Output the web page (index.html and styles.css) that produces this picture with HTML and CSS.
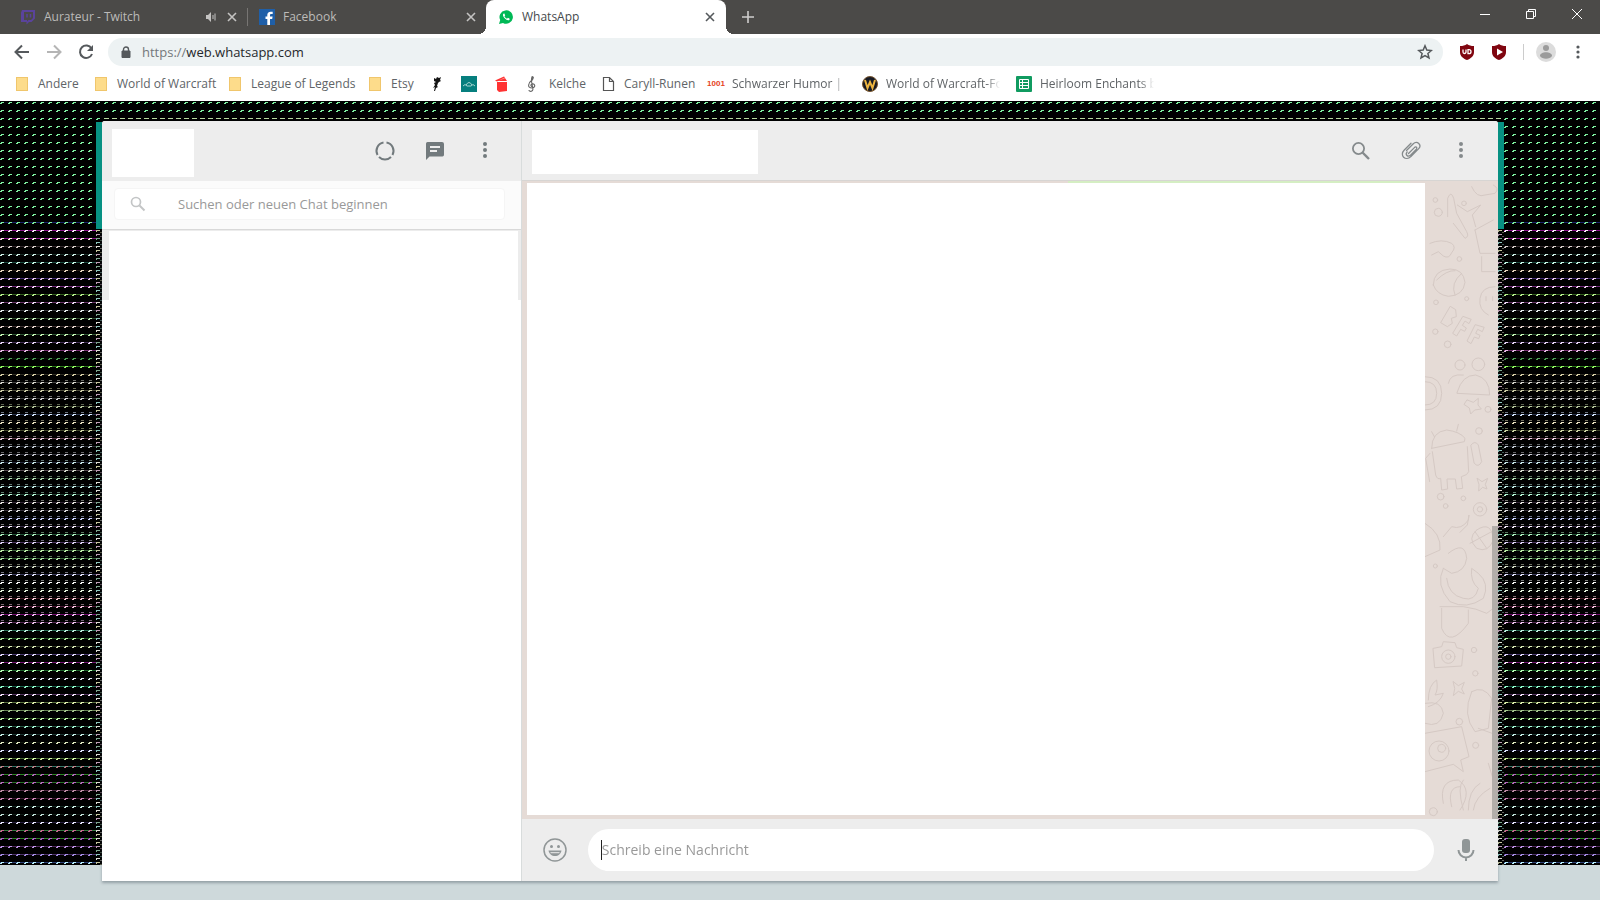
FILE: index.html
```html
<!DOCTYPE html>
<html lang="de">
<head>
<meta charset="utf-8">
<title>WhatsApp</title>
<link rel="stylesheet" href="styles.css">
</head>
<body>
<header class="browser">
  <div class="titlebar">
    <div class="tab tab-first">
      <svg class="fav" viewBox="0 0 16 16"><path d="M2 1h13v8.500l-3.500 3.500H9l-2.500 2.500V13H1V3.500z" fill="#5a439c"/><path d="M4 3h9v6l-2 2H8.500L7 12.500V11H4z" fill="#4b4a48"/><path d="M7 5v3.500M10.500 5v3.500" stroke="#5a439c" stroke-width="1.500"/></svg>
      <span class="tab-title">Aurateur - Twitch</span>
      <svg class="sound" viewBox="0 0 12 12"><path d="M1 4h2l3-3v10L3 8H1z" fill="#c4c3c2"/><path d="M8 4v4M10 2.500v7" stroke="#c4c3c2"/></svg>
      <button class="close" aria-label="Tab schließen"><svg viewBox="0 0 10 10"><path d="M1 1l8 8M9 1L1 9"/></svg></button>
    </div>
    <div class="tab tab-second">
      <svg class="fav" viewBox="0 0 16 16"><path d="M0 0h16v16H0z" fill="#1f5fa8"/><path d="M11 16V10h2.200l.4-2.500H11V6.300c0-.9.400-1.300 1.300-1.300h1.400V2.700h-2C9.400 2.700 8.300 4 8.300 6v1.500H6.500V10h1.800v6z" fill="#fff"/></svg>
      <span class="tab-title">Facebook</span>
      <button class="close" aria-label="Tab schließen"><svg viewBox="0 0 10 10"><path d="M1 1l8 8M9 1L1 9"/></svg></button>
    </div>
    <div class="tab tab-active">
      <svg class="fav" viewBox="0 0 16 16"><path d="M1 15l1.200-4A6.700 6.700 0 1 1 5 13.900z" fill="#00b956"/><path d="M5.700 4.500c-1.500 1-.7 3 1 4.800s4 2.700 4.900 1.100c.2-.6 0-.8-1.700-1.600L9 9.700C7.800 9.200 7 8.400 6.400 7.300l.8-.9-.8-1.800z" fill="#fff"/></svg>
      <span class="tab-title">WhatsApp</span>
      <button class="close" aria-label="Tab schließen"><svg viewBox="0 0 10 10"><path d="M1 1l8 8M9 1L1 9"/></svg></button>
    </div>
    <button class="newtab" aria-label="Neuer Tab"><svg viewBox="0 0 12 12"><path d="M6 0v12M0 6h12"/></svg></button>
    <div class="winbtns">
      <button aria-label="Minimieren"><svg viewBox="0 0 12 12"><path d="M1 6.500h10"/></svg></button>
      <button aria-label="Verkleinern"><svg viewBox="0 0 12 12"><path d="M1.500 3.500h7v7h-7zM3.500 3.500v-2h7v7h-2"/></svg></button>
      <button aria-label="Schließen"><svg viewBox="0 0 12 12"><path d="M1 1l10 10M11 1L1 11"/></svg></button>
    </div>
  </div>
  <div class="toolbar">
    <button class="nav" aria-label="Zurück"><svg viewBox="0 0 16 16"><path d="M15 8H2M8 1.500L1.500 8 8 14.500"/></svg></button>
    <button class="nav nav-off" aria-label="Vorwärts"><svg viewBox="0 0 16 16"><path d="M1 8h13M8 1.500L14.500 8 8 14.500"/></svg></button>
    <button class="nav nav-last" aria-label="Neu laden"><svg viewBox="0 0 16 16"><path d="M13.500 4.500A6.200 6.200 0 1 0 14 10"/><path d="M15 1v6H9z" class="solid"/></svg></button>
    <div class="address">
      <svg class="lock" viewBox="0 0 10 12"><path d="M1 5h8v6.500H1z" fill="#55595c" stroke="#55595c"/><path d="M2.500 5V3.500a2.500 2.500 0 0 1 5 0V5" fill="none" stroke="#55595c" stroke-width="1.400"/></svg>
      <span class="url"><span class="scheme">https://</span>web.whatsapp.com</span>
      <button class="star" aria-label="Lesezeichen"><svg viewBox="0 0 16 16"><path d="M8 1.800l1.800 4.300 4.600.4-3.500 3 1.100 4.500L8 11.600 4 14l1.100-4.500-3.500-3 4.600-.4z"/></svg></button>
    </div>
    <button class="ext" aria-label="uBlock"><svg viewBox="0 0 16 16"><path d="M8 0c2 1.500 4 2 7 2v6c0 4-3 6.500-7 8-4-1.500-7-4-7-8V2c3 0 5-.5 7-2z" fill="#800610"/><path d="M4 5.500V8a1.500 1.500 0 0 0 3 0V5.500M9 5.700v4h1a2 2 0 0 0 0-4z" fill="none" stroke="#fff" stroke-width="1.300"/></svg></button>
    <button class="ext" aria-label="Video"><svg viewBox="0 0 16 16"><path d="M8 0c2 1.500 4 2 7 2v6c0 4-3 6.500-7 8-4-1.500-7-4-7-8V2c3 0 5-.5 7-2z" fill="#800610"/><path d="M6 4.500v7L12 8z" fill="#fff"/></svg></button>
    <span class="sep"></span>
    <button class="profile" aria-label="Profil"><svg viewBox="0 0 20 20"><circle cx="10" cy="10" r="10" fill="#dcdcdc"/><circle cx="10" cy="6" r="3" fill="#9b9b9b"/><path d="M4 14c0-5 12-5 12 0-2 3.500-10 3.500-12 0z" fill="#9b9b9b"/></svg></button>
    <button class="more" aria-label="Menü"><svg viewBox="0 0 4 14"><circle cx="2" cy="2" r="1.600"/><circle cx="2" cy="7" r="1.600"/><circle cx="2" cy="12" r="1.600"/></svg></button>
  </div>
  <nav class="bookmarks">
    <a href="#" class="bm bm-andere"><span class="folder"></span>Andere</a>
    <a href="#" class="bm bm-wow"><span class="folder"></span>World of Warcraft</a>
    <a href="#" class="bm bm-lol"><span class="folder"></span>League of Legends</a>
    <a href="#" class="bm bm-etsy"><span class="folder"></span>Etsy</a>
    <a href="#" class="bm bm-icon" aria-label="Figur"><svg viewBox="0 0 16 16"><path d="M6 2l2 1 1-2 2 1 2-1-1 3 1 1-2 1-1 1-1 3 1 1-2 1-1 3H6l1-4-2 1 2-3-1-2 2-1-2-1z" fill="#151515"/></svg></a>
    <a href="#" class="bm bm-icon" aria-label="Wappen"><svg viewBox="0 0 16 16"><path d="M0 0h16v16H0z" fill="#067f7e"/><path d="M2 10q2-3 4 0M10 10q2-3 4 0M5 9q3-5 6 0M6 10h4" fill="none" stroke="#a5d5d1"/></svg></a>
    <a href="#" class="bm bm-box" aria-label="Box"><svg viewBox="0 0 16 16"><path d="M3 6h10v9l-8 1-2-2zM1 4.500L10 .5l1 1-8 4zM4 5l7-3 2 3z" fill="#f33"/></svg></a>
    <a href="#" class="bm bm-kelche"><svg viewBox="0 0 16 16"><path d="M8.500 0C6 3 8 7 9 13c0 3-4 3-4 1M8 4.500C11 0 8 0 8 4c-4 3-5 8 0 8 5-1 2-5 0-4-2 1-1 3 1 3" fill="none" stroke="#666" stroke-width="1.100"/></svg>Kelche</a>
    <a href="#" class="bm bm-runen"><svg viewBox="0 0 16 16"><path d="M3.500 1.500h6l4 4v9h-10zM9.500 1.500v4h4" fill="none" stroke="#555" stroke-width="1.200"/></svg>Caryll-Runen</a>
    <a href="#" class="bm bm-humor"><b>1001</b><span class="fade">Schwarzer Humor | Best</span></a>
    <a href="#" class="bm bm-forum"><svg viewBox="0 0 16 16"><circle cx="8" cy="8" r="7.500" fill="#171a24" stroke="#76542f"/><path d="M3 4l2.500 8L8 6l2.500 6L13 4" fill="none" stroke="#edb43f" stroke-width="2"/></svg><span class="fade">World of Warcraft-Foren</span></a>
    <a href="#" class="bm bm-heirloom"><svg viewBox="0 0 16 16"><rect width="16" height="16" rx="1" fill="#109b60"/><path d="M3.500 3.500h9v9h-9zM3.500 6.500h9M3.500 9.500h9M6.500 3.500v9" fill="none" stroke="#fff"/></svg><span class="fade">Heirloom Enchants by Slot</span></a>
  </nav>
</header>
<main class="page">
  <canvas class="static" id="static"></canvas>
  <div class="app">
    <section class="side">
      <header class="bar side-bar">
        <div class="avatar"></div>
        <div class="actions">
          <button aria-label="Status"><svg viewBox="0 0 24 24"><g fill="none" stroke="#727a7d" stroke-width="2"><path d="M13.500 3.600A8.500 8.500 0 0 1 19.500 16"/><path d="M18 18a8.500 8.500 0 0 1-12 0"/><path d="M4.500 16A8.500 8.500 0 0 1 10.500 3.600"/></g></svg></button>
          <button aria-label="Neuer Chat"><svg viewBox="0 0 24 24"><path d="M19 3H4.500A1.700 1.700 0 0 0 3 4.700V21l3.500-3.500H19.500A1.700 1.700 0 0 0 21 15.800V5a2 2 0 0 0-2-2z" fill="#727a7d"/><path d="M7 8h10M7 12h7" stroke="#ededed" stroke-width="2"/></svg></button>
          <button aria-label="Menü"><svg viewBox="0 0 24 24"><g fill="#727a7d"><circle cx="12" cy="5" r="2"/><circle cx="12" cy="11" r="2"/><circle cx="12" cy="17" r="2"/></g></svg></button>
        </div>
      </header>
      <div class="search">
        <label class="search-box">
          <svg viewBox="0 0 16 16"><circle cx="6" cy="6" r="4.500" fill="none" stroke="#c3c5c6" stroke-width="1.700"/><path d="M9.500 9.500l5 5" stroke="#c3c5c6" stroke-width="2"/></svg>
          <input type="text" aria-label="Suchen" placeholder="Suchen oder neuen Chat beginnen">
        </label>
      </div>
      <div class="list"><div class="row"></div></div>
    </section>
    <section class="chat">
      <header class="bar chat-bar">
        <div class="contact"></div>
        <div class="actions">
          <button aria-label="Suchen"><svg viewBox="0 0 24 24"><g fill="none" stroke="#858a8c"><circle cx="9.500" cy="9.500" r="5.600" stroke-width="1.800"/><path d="M13.500 13.500l6.500 6.500" stroke-width="2.300"/></g></svg></button>
          <button aria-label="Anhängen"><svg viewBox="0 0 24 24"><path d="M6.500 12.500l6.800-6.800c3.800-3.800 9 1.400 5.200 5.200l-7.600 7.600C5.600 23.800-1 17.200 4.300 12L11 5.300M8.500 15.500l5.900-5.900c2-1.800 3 .4 2 1.600l-5.900 5.900c-2.700 2.700-5.700-.7-3.300-3.200" transform="translate(1 -1)" fill="none" stroke="#858a8c" stroke-width="1.300" stroke-linecap="round"/></svg></button>
          <button aria-label="Menü"><svg viewBox="0 0 24 24"><g fill="#858a8c"><circle cx="12" cy="5" r="2"/><circle cx="12" cy="11" r="2"/><circle cx="12" cy="17" r="2"/></g></svg></button>
        </div>
      </header>
      <div class="messages">
        <svg class="doodles" viewBox="75 3 219 1914" preserveAspectRatio="xMaxYMin slice">
          <g fill="none" stroke="#d5c9c4" stroke-width="3" stroke-linecap="round" stroke-linejoin="round">
            <path d="M143 110V55q10-25 18 0l9 45 30 55q8 15-5 20l-35-45M172 75l30 20 40-20-25 30 10 35M215 20q15 35 40 25l30-5q15-15-5-25M225 150l55-30M225 150l15 70h45M245 230v45h40"/>
            <path d="M90 190q35-15 65 0 15 12 0 28-8 20-25 10l-15-13-20 10M100 315q0-45 50-48 40 0 45 40-5 40-50 42-35-5-45-34zM110 300q30-30 55-28M185 280q-35 30-20 65M285 320q-40 0-45 35-5 35 25 50M258 350v12M278 350v12"/>
            <path d="M150 380l-28 48 20 12 15-10-3-15 15-5-2-20zM188 410l-30 50 12 8 12-20 12 6 5-10-12-8 8-13 12 8 6-12zM225 435l-24 48 12 8 10-20 13 5 4-10-13-6 6-12 14 7 5-12z"/>
            <circle cx="180" cy="555" r="15"/><circle cx="235" cy="553" r="19"/><path d="M145 610q5-30 45-25M172 635q15-50 55-50 42 10 42 60l-97-5zM75 590q50 0 50 50t-50 50M75 605q35 0 35 35t-35 35"/>
            <path d="M95 805q0-50 45-55 40 5 55 25l-2 10-98 20zM95 755l8 15M175 733l-5 20M97 815l10 70q5 15 15 10l3 35 18-3-2-30h25l4 30 18-2-4-35q20-5 22-15l-4-75M213 795q12-15 22 0l10 50q-10 20-22 5zM90 820l-13 15 12 70"/>
            <path d="M75 1030q50 30 45 80l-45 20M130 1070l25-30q30 10 50-20l2-15-5 30-22 22M145 1120q50-40 55 15-5 40-45 45l-25-15M130 1165q-25 50 20 100 50 25 100-10 20-45-15-75l-20-15q-5 40 20 60-10 40-45 30-45-10-50-60M120 1280h70q40 5 70 20l20-15M125 1285v60q25 60 80-15v-40"/>
            <path d="M100 1405l25-5 5-15 35 3 5 15 20 5-5 50-80 5zM160 1505l15 12 18-10-8 20 8 15-18-8-15 13 4-20zM215 1535q35-20 60 20l-10 90-40 10q-40-50-10-120M85 1560q0-45 25-60 5 30-5 45l25-5q-10 30-45 40M75 1570q50-10 55 30-10 45-55 30"/>
            <path d="M75 1660l110-20 22 90-25 10 8 35-30-22-85 22M235 1645l55 20M130 1870q-15-70 45-70 45 30 5 90M155 1880q-15-60 25-60M190 1890q-20-70 0-90M205 1890q0-60 35-80M220 1890q5-40 50-65M265 1750l30 100"/>
            <circle cx="145" cy="1430" r="20"/><circle cx="145" cy="1430" r="8"/><circle cx="117" cy="1713" r="30"/><circle cx="125" cy="1705" r="12"/><circle cx="240" cy="988" r="20"/><circle cx="240" cy="988" r="8"/><path d="M202 660l18 7 15-12-1 20 10 12-20 3-12 12-4-18-15-10zM232 895l14 10 17-10-7 18 5 14-13-5-12 11 1-18zM230 1050q45-30 50 30-15 40-50 25-30-30 0-55M210 1090l65-35M225 1055l35 50"/>
            <circle cx="115" cy="97" r="12"/><circle cx="106" cy="60" r="7"/><circle cx="192" cy="70" r="7"/><circle cx="106" cy="455" r="8"/><circle cx="143" cy="493" r="10"/><circle cx="178" cy="237" r="7"/><circle cx="200" cy="356" r="6"/><circle cx="108" cy="367" r="7"/><circle cx="264" cy="688" r="9"/><circle cx="237" cy="753" r="10"/><circle cx="122" cy="950" r="10"/><circle cx="190" cy="955" r="7"/><circle cx="137" cy="978" r="7"/><circle cx="222" cy="1410" r="8"/><circle cx="226" cy="1480" r="8"/><circle cx="178" cy="1625" r="10"/><circle cx="227" cy="1696" r="9"/><circle cx="100" cy="1895" r="12"/><circle cx="106" cy="1158" r="6"/>
          </g>
        </svg>
        <div class="strip"></div>
        <div class="cover"></div>
        <div class="thumb"></div>
      </div>
      <footer class="compose">
        <button aria-label="Emoji"><svg viewBox="0 0 24 24"><circle cx="12" cy="12" r="11" fill="none" stroke="#909697" stroke-width="1.500"/><g fill="#909697"><circle cx="8.500" cy="8.500" r="1.500"/><circle cx="15.500" cy="8.500" r="1.500"/><path d="M5.500 12.500h13c-.6 3.500-3.200 5.500-6.500 5.500s-5.900-2-6.500-5.500z"/></g><path d="M7.500 14.700h9" stroke="#ededed"/></svg></button>
        <div class="field"><span class="caret"></span><input type="text" aria-label="Nachricht" placeholder="Schreib eine Nachricht"></div>
        <button class="mic" aria-label="Sprachnachricht"><svg viewBox="0 0 24 24"><rect x="8" y="1" width="8" height="14" rx="3" fill="#909697"/><path d="M4.500 12a7.500 7.500 0 0 0 15 0M12 19v4" fill="none" stroke="#909697" stroke-width="2"/></svg></button>
      </footer>
    </section>
  </div>
</main>
<script src="static.js"></script>
</body>
</html>
```
FILE: styles.css
```css
* { box-sizing: border-box; }
body {
  margin: 0;
  height: 100vh;
  display: flex;
  flex-direction: column;
  overflow: hidden;
  background: #ced9db;
  font-family: "Open Sans", "Noto Sans", sans-serif;
  font-size: 12px;
}
button { border: 0; padding: 0; margin: 0; background: none; display: flex; align-items: center; justify-content: center; flex: none; }
input { border: 0; padding: 0; outline: 0; background: none; font: inherit; }
svg { display: block; flex: none; }

.browser { background: #fff; flex: none; }
.titlebar { height: 34px; display: flex; background: #4b4a48; }
.tab { display: flex; align-items: center; color: #bcbbb9; min-width: 0; }
.tab-first { width: 248px; padding: 0 11px 0 20px; position: relative; }
.tab-first::after { content: ""; position: absolute; right: 0; top: 8px; width: 1px; height: 18px; background: #777573; }
.tab-second { width: 238px; padding: 0 10px 0 11px; }
.tab-active { width: 240px; padding: 0 11px 0 12px; background: #fff; color: #45494c; border-radius: 8px 8px 0 0; position: relative; }
.tab-active::before, .tab-active::after { content: ""; position: absolute; bottom: 0; width: 8px; height: 8px; }
.tab-active::before { left: -8px; background: radial-gradient(circle at 0 0, transparent 8px, #fff 8px); }
.tab-active::after { right: -8px; background: radial-gradient(circle at 100% 0, transparent 8px, #fff 8px); }
.fav { width: 16px; height: 16px; margin-right: 8px; }
.tab-title { flex: 1; white-space: nowrap; padding-bottom: 2px; }
.sound { width: 12px; height: 12px; margin-right: 10px; }
.close { width: 10px; height: 10px; }
.close svg { width: 10px; height: 10px; }
.close path { stroke: #c4c3c2; stroke-width: 1.600; }
.tab-active .close path { stroke: #55595c; }
.newtab { width: 12px; margin-left: 16px; }
.newtab svg { width: 12px; height: 12px; }
.newtab path { stroke: #cfcecd; stroke-width: 1.600; }
.winbtns { margin-left: auto; display: flex; padding-bottom: 6px; }
.winbtns button { width: 46px; }
.winbtns svg { width: 12px; height: 12px; }
.winbtns path { stroke: #fff; fill: none; }

.toolbar { height: 36px; display: flex; align-items: center; padding: 0 20px 0 14px; }
.nav { width: 16px; margin-right: 16px; }
.nav-last { margin-right: 14px; }
.nav svg { width: 16px; height: 16px; }
.nav path { fill: none; stroke: #55595c; stroke-width: 2; }
.nav .solid { fill: #55595c; stroke: none; }
.nav-off path { stroke: #b5b5b5; }
.address { flex: 1; height: 28px; margin-right: 16px; border-radius: 14px; background: #edf2f3; display: flex; align-items: center; padding: 0 10px 0 13px; }
.lock { width: 10px; height: 12px; margin-right: 11px; }
.url { flex: 1; font-size: 13px; line-height: 20px; color: #25282b; }
.scheme { color: #74787b; }
.star svg { width: 16px; height: 16px; }
.star path { fill: none; stroke: #55595c; stroke-width: 1.500; }
.ext { margin-right: 16px; }
.ext svg { width: 16px; height: 16px; }
.sep { width: 1px; height: 16px; background: #ccc; margin-right: 12px; }
.profile svg { width: 20px; height: 20px; }
.more { margin-left: 20px; }
.more svg { width: 4px; height: 14px; fill: #55595c; }

.bookmarks { height: 31px; display: flex; align-items: center; padding: 0 0 4px 16px; }
.bm { display: flex; align-items: center; color: #606467; text-decoration: none; white-space: nowrap; flex: none; }
.bm svg { width: 16px; height: 16px; }
.folder { width: 12px; height: 14px; margin-right: 10px; background: #fddc8b; border: 1px solid #f0c66c; }
.bm-andere { width: 79px; }
.bm-wow { width: 134px; }
.bm-lol { width: 140px; }
.bm-etsy { width: 59px; }
.bm-icon { width: 33px; }
.bm-box { width: 30px; }
.bm-kelche { width: 76px; gap: 9px; }
.bm-runen { width: 108px; gap: 8px; }
.bm-humor { width: 154px; gap: 8px; }
.bm-humor b { width: 16px; font: bold 8px/16px "Liberation Sans", sans-serif; color: #e5431b; display: flex; justify-content: center; }
.bm-forum { width: 154px; gap: 8px; }
.bm-heirloom { gap: 8px; }
.fade { width: 114px; overflow: hidden; -webkit-mask-image: linear-gradient(90deg, #000 88%, transparent); mask-image: linear-gradient(90deg, #000 88%, transparent); }

.page { flex: 1; min-height: 0; position: relative; padding: 20px 102px 19px; display: flex; }
.static { position: absolute; left: 0; top: 0; width: 100%; height: calc(100% - 35px); }
.app { position: relative; flex: 1; min-width: 0; display: flex; background: #fff; border-radius: 3px 3px 0 0; box-shadow: 0 2px 3px rgba(60, 75, 85, .4); }
.app::before, .app::after { content: ""; position: absolute; top: 1px; width: 6px; height: 107px; background: #079183; }
.app::before { left: -6px; }
.app::after { right: -6px; }
.side { width: 30%; flex: none; display: flex; flex-direction: column; }
.chat { flex: 1; min-width: 0; display: flex; flex-direction: column; border-left: 1px solid #d8dcdc; }
.bar { height: 60px; flex: none; background: #ededed; display: flex; align-items: center; justify-content: space-between; }
.side-bar { padding: 0 24px 0 10px; border-radius: 3px 0 0 0; }
.chat-bar { padding: 0 25px 0 10px; border-bottom: 1px solid #d7d5d3; border-radius: 0 3px 0 0; }
.avatar { width: 82px; height: 48px; margin-top: 4px; background: #fff; }
.contact { width: 226px; height: 44px; margin-top: 2px; background: #fff; }
.actions { display: flex; gap: 26px; }
.actions svg { width: 24px; height: 24px; }
.search { height: 49px; flex: none; padding: 7px 16px 9px 12px; background: #fbfbfb; border-bottom: 1px solid #d9d9d9; }
.search-box { height: 32px; display: flex; align-items: center; background: #fff; border: 1px solid #f5f5f5; border-radius: 4px; padding-left: 15px; }
.search-box svg { width: 16px; height: 16px; margin-right: 32px; }
.search-box input { flex: 1; min-width: 0; font-size: 13px; }
input::placeholder { color: #999; opacity: 1; }
.list { flex: 1; }
.row { height: 70px; border: solid #ececec; border-width: 1px 3px 0 7px; }
.messages { flex: 1; min-height: 0; position: relative; display: flex; background: #e5dbd6; padding: 2px 73px 4px 5px; }
.doodles { position: absolute; right: 0; top: 0; width: 73px; height: 100%; }
.strip { position: absolute; top: 0; left: 56%; width: 35%; height: 2px; background: #d5eec3; }
.cover { flex: 1; background: #fff; }
.thumb { position: absolute; right: 0; bottom: 0; width: 6px; height: 46%; background: #b3aeaa; }
.compose { height: 62px; flex: none; background: #ededed; display: flex; align-items: center; padding: 0 20px 0 21px; }
.compose svg { width: 24px; height: 24px; }
.field { flex: 1; height: 42px; margin: 0 20px 0 21px; border-radius: 21px; background: #fff; display: flex; align-items: center; padding: 0 13px; font-size: 14px; }
.caret { width: 1px; height: 20px; background: #222; }
.field input { flex: 1; min-width: 0; padding-bottom: 2px; }
```
FILE: static.js
```js
const canvas = document.getElementById('static');
const ctx = canvas.getContext('2d');

// One entry per 8px band: dash colour, line colour, line strength.
const bands = [
  ...Array(15).fill('7ef0a0 000000 0'),
  '7ef0a0 2838b0 .7', 'fff0ff c818c8 .8', 'fff0e8 c818c8 .8', 'd8d0cc 705860 .5', 'd0f0e8 407868 .4',
  'c8f8e8 287868 .7', 'e8d8c0 604838 .4', 'e8c8e8 5838a0 .8', 'f8d8f8 a038b0 .8', 'b8f090 488828 .8',
  'f0e0f8 a850a8 .7', 'e8f0f0 606068 .6', 'c8f0c0 487848 .7', 'e8d8d0 705858 .6', 'c8f8b8 488850 .7',
  'e8d8f8 684888 .7', 'e8c0e8 a840a0 .8', '50a058 103818 .4', '98f868 38a820 .8', 'd8d0a8 686048 .5',
  'd8d8d0 686868 .7', 'd0d0a8 686850 .8', 'd8d8d8 686868 .6', 'b8c8a0 506040 .7', 'd8e8ff 405078 .7',
  'e8e0c0 282820 .4', 'd0d8a8 606840 .7', 'f0d8e8 986078 .7', 'c8d0d8 404858 .7', 'c8c8d0 505060 .7',
  'c8e8e8 404868 .7', 'd8e0d0 706068 .8', 'b8e0b8 305038 .7', 'c8f0e8 406870 .7', 'b8f8d8 386850 .7',
  'e8e8e0 604868 .6', 'e0e0e0 706078 .5', 'd0d8ff 404080 .4', 'f8f0f8 685088 .6', 'b0f0c0 388858 .7',
  'e0d8f8 684888 .8', 'c0f0a8 508850 .8', 'b0e8a8 488848 .8', 'd8e0c8 505860 .7', 'e8e8ff 606098 .7',
  'f8f8f8 282830 .3', 'e8f8e0 283028 .3', 'f8d0d8 903048 .5', 'f8c8e0 a83078 .5', 'f8c0f8 a810a0 .8',
  'f0c8f0 783878 .8', 'c0f0e0 308868 .9', 'b8f0a8 308838 .7', 'd8e8b8 586840 .6', 'e8e0ff 6850a0 .8',
  'fff0ff a818a8 .8', 'b8ffb8 208838 .8', 'e8f0f8 303048 .4', '98ffd0 208868 .8', 'f8e8ff 784888 .8',
  'e0f0b0 709050 .9', 'a8c890 789860 1', 'c8ffb0 386828 .8', 'a8f8d8 307858 .8', 'c8f0e8 306058 .6',
  'e0e8c0 304028 .4', 'e0e8ff 383068 .5', 'd8f8a8 507838 1', 'c08088 408878 1', 'b868c0 309828 1',
  'b868c0 38a038 .8', 'c090a8 784068 .7', 'd088b8 703058 .6', 'd0f0e8 285848 .5', 'c0e0d8 284838 .4',
  'e8e8ff 483878 .6', 'c86890 388848 1', 'b060c8 309828 1', 'c098e8 703880 .8', 'a890e8 583878 1',
  'b8f0ff 4058a8 .8'
];

// Two-row dash tile repeated every 8px.
function drawBand(y, width, spec, index) {
  const [dash, line, strength] = spec.split(' ');
  ctx.globalAlpha = Number(strength) * 0.85;
  ctx.fillStyle = '#' + line;
  ctx.fillRect(0, y, width, 1);
  // Bands 35-65 carry a second, fainter row of dashes above the main one.
  if (index > 34 && index < 66) {
    ctx.globalAlpha = 0.5;
    ctx.fillStyle = '#' + dash;
    for (let x = 1; x < width; x += 8) ctx.fillRect(x, y - 2, 3, 1);
  }
  ctx.globalAlpha = 1;
  ctx.fillStyle = '#' + dash;
  for (let x = 0; x < width; x += 8) {
    ctx.fillRect(x + 1, y, 3, 1);
    ctx.fillRect(x, y + 1, 2, 1);
  }
}

// Narrow noisy column beside the app window.
function drawEdge(x, height) {
  const tints = ['#c8c8a0', '#90c8c0', '#c0a0b8', '#e0e0d8', '#80a890'];
  ctx.fillStyle = '#000';
  ctx.fillRect(x, 128, 6, height);
  for (let y = 129, i = 0; y < height; y += 4, i++) {
    ctx.fillStyle = tints[(i * 7 + (i >> 3)) % tints.length];
    ctx.fillRect(x, y, 4, 1);
    ctx.fillRect(x, y + 1, 1, 1);
    ctx.globalAlpha = 0.45;
    ctx.fillRect(x + 4, y + 2, 2, 1);
    ctx.globalAlpha = 1;
  }
}

function draw() {
  const width = canvas.clientWidth;
  const height = canvas.clientHeight;
  canvas.width = width;
  canvas.height = height;
  ctx.fillStyle = '#000';
  ctx.fillRect(0, 0, width, height);
  for (let i = 0; 1 + i * 8 < height; i++) {
    drawBand(1 + i * 8, width, bands[i % bands.length], i);
  }
  ctx.fillStyle = '#000';
  ctx.fillRect(102, 17, width - 204, 3);
  ctx.fillStyle = '#b8d8a0';
  for (let x = 104; x < width - 102; x += 8) ctx.fillRect(x, 17, 5, 1);
  drawEdge(96, height);
  drawEdge(width - 102, height);
}

draw();
window.addEventListener('resize', draw);
```
